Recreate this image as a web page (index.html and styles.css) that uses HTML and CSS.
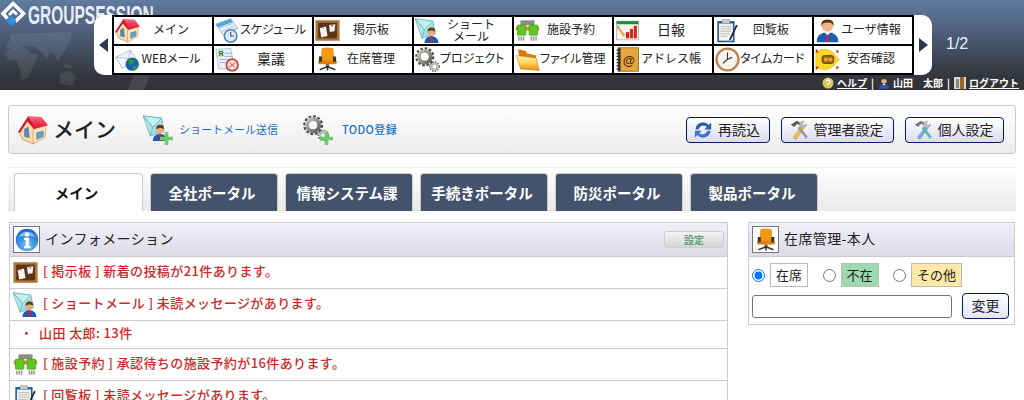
FILE: index.html
```html
<!DOCTYPE html>
<html lang="ja">
<head>
<meta charset="utf-8">
<title>GroupSession</title>
<link rel="stylesheet" href="styles.css">
</head>
<body>
<svg class="defs" width="0" height="0">
  <defs>
    <linearGradient id="g-roof" x1="0" y1="0" x2="0" y2="1"><stop offset="0" stop-color="#f4798a"/><stop offset=".5" stop-color="#ec3a52"/><stop offset="1" stop-color="#e0122e"/></linearGradient>
    <linearGradient id="g-mail" x1="0" y1="0" x2="1" y2="1"><stop offset="0" stop-color="#d4f5f5"/><stop offset="1" stop-color="#7fd2d8"/></linearGradient>
    <linearGradient id="g-gear" x1="0" y1="0" x2="1" y2="1"><stop offset="0" stop-color="#c4c4be"/><stop offset="1" stop-color="#5e5e5a"/></linearGradient>
    <linearGradient id="g-folder" x1="0" y1="0" x2="0" y2="1"><stop offset="0" stop-color="#fff3b0"/><stop offset=".45" stop-color="#ffd860"/><stop offset="1" stop-color="#f08a10"/></linearGradient>
    <radialGradient id="g-info" cx=".5" cy=".75" r=".8"><stop offset="0" stop-color="#6fc0f8"/><stop offset="1" stop-color="#0d5fc4"/></radialGradient>
    <symbol id="i-home" viewBox="0 0 32 32">
      <path d="M1 18 L10 4 L17 14 L17 31 L5 26Z" fill="#f9dcae" stroke="#b98a55" stroke-width=".8"/>
      <path d="M16 15 L30 11 L29 24 L16 31Z" fill="#fbe3bd" stroke="#b98a55" stroke-width=".6"/>
      <path d="M11 1 L25 2 L32 11 L17 15Z" fill="url(#g-roof)"/>
      <path d="M11 1 L0 18 L2 19 L10 7 L17 15 L18 14Z" fill="#d0152e"/>
      <path d="M7 15 L11 13 L12 24 L7 23Z" fill="#3c8ede" stroke="#7a5a30" stroke-width=".5"/>
      <path d="M20 19 L27 17 L27 23 L20 26Z" fill="#58a2e4" stroke="#7a5a30" stroke-width=".5"/>
    </symbol>
    <symbol id="i-schedule" viewBox="0 0 32 32">
      <path d="M1 8 L20 1 L29 13 L12 24Z" fill="#eaf3fb" stroke="#7fa5c4"/>
      <path d="M1 8 L20 1 L23 5 L4 12Z" fill="#58a4d8"/>
      <path d="M6 13 L22 7 M9 17 L25 10 M12 20 L27 13" stroke="#9fc2dc" stroke-width="1.2"/>
      <circle cx="20" cy="23" r="8" fill="#dce8f4" stroke="#5a86b5" stroke-width="2"/>
      <path d="M20 18 V23 H24" stroke="#345a86" stroke-width="1.5" fill="none"/>
    </symbol>
    <symbol id="i-board" viewBox="0 0 32 32">
      <rect x="1" y="3" width="30" height="26" fill="#a9713c" stroke="#c49464"/>
      <rect x="4" y="6" width="24" height="20" fill="#5d3416"/>
      <path d="M6 13 L14 11 L16 23 L8 25Z" fill="#f4f4f2"/>
      <path d="M18 9 L26 8 L25 17 L19 18Z" fill="#eef1f4"/>
      <circle cx="10" cy="13" r="1.3" fill="#9fc8ea"/>
      <circle cx="22" cy="10" r="1.3" fill="#d8504c"/>
    </symbol>
    <symbol id="i-smail" viewBox="0 0 32 32">
      <path d="M0 1 L23 4 L26 20 L9 26Z" fill="url(#g-mail)" stroke="#4fa5b0" stroke-width=".8"/>
      <path d="M0 1 L23 4 L12 15Z" fill="#c6f0ee" stroke="#4fa5b0" stroke-width=".7"/>
      <path d="M0 1 L12 15 L9 26" fill="none" stroke="#4fa5b0" stroke-width=".7"/>
      <circle cx="21" cy="18" r="5" fill="#e6ab80"/>
      <path d="M16 17.5 Q16 12 21 12 Q26 12 26 17.5 Q21 14.5 16 17.5Z" fill="#6b3a17"/>
      <path d="M12 32 Q12 24 21 23 Q30 24 30 32Z" fill="#1f58ad"/>
      <path d="M20 24 h2 l.5 6 -1.5 2 -1.5 -2Z" fill="#d22"/>
    </symbol>
    <symbol id="i-reserve" viewBox="0 0 32 32">
      <rect x="7" y="3" width="18" height="6" fill="#8c8c84"/>
      <rect x="1" y="11" width="30" height="5" fill="#d98a3f"/>
      <rect x="3" y="9" width="11" height="13" rx="1" fill="#5fc81e" stroke="#2f8a10" stroke-width=".7"/>
      <rect x="18" y="9" width="11" height="13" rx="1" fill="#5fc81e" stroke="#2f8a10" stroke-width=".7"/>
      <rect x="4" y="23" width="9" height="6" fill="#e8e8e0"/>
      <rect x="19" y="23" width="9" height="6" fill="#e8e8e0"/>
      <path d="M5 24 V29 M8 24 V29 M11 24 V29 M21 24 V29 M24 24 V29 M27 24 V29" stroke="#444" stroke-width=".8"/>
    </symbol>
    <symbol id="i-report" viewBox="0 0 32 32">
      <rect x="2" y="4" width="28" height="24" fill="#f4f4ee" stroke="#a7b0ac"/>
      <rect x="2" y="4" width="28" height="4" fill="#1d8a3f"/>
      <rect x="14" y="18" width="4" height="8" fill="#d8241d"/>
      <rect x="19" y="14" width="4" height="12" fill="#d8241d"/>
      <rect x="24" y="10" width="4" height="16" fill="#d8241d"/>
      <path d="M3 11 L12 23" stroke="#e9b04a" stroke-width="3"/>
      <path d="M3 11 L5 12" stroke="#ef7a8c" stroke-width="3"/>
    </symbol>
    <symbol id="i-circular" viewBox="0 0 32 32">
      <rect x="3" y="4" width="22" height="27" fill="#1c56a6"/>
      <rect x="5" y="7" width="18" height="22" fill="#f4f4ec"/>
      <rect x="9" y="2" width="10" height="5" rx="1" fill="#c5cbd2" stroke="#777" stroke-width=".5"/>
      <path d="M7 11 H21 M7 14 H21 M7 17 H21 M7 20 H19 M7 23 H16" stroke="#aaa"/>
      <path d="M28 9 L19 28" stroke="#223" stroke-width="2.2"/>
    </symbol>
    <symbol id="i-user" viewBox="0 0 32 32">
      <circle cx="16" cy="10" r="7.5" fill="#efb48a"/>
      <path d="M8 11 Q7 2 16 2 Q25 2 24 11 Q22 5 16 6 Q10 5 8 11Z" fill="#5c2f12"/>
      <path d="M2 31 Q2 19 16 18 Q30 19 30 31Z" fill="#1f5ab3"/>
      <path d="M12 18 L16 23 L20 18Z" fill="#fff"/>
      <path d="M15 21 h2 l.8 8 -1.8 2 -1.8 -2Z" fill="#dc2230"/>
    </symbol>
    <symbol id="i-webmail" viewBox="0 0 32 32">
      <path d="M1 13 L20 4 L28 17 L9 27Z" fill="#f2f5f8" stroke="#9db4c8"/>
      <path d="M1 13 L17 15 L20 4" fill="none" stroke="#9db4c8"/>
      <circle cx="22" cy="22" r="8.5" fill="#1a5fb8"/>
      <path d="M17 16 Q24 15 25 20 Q22 24 18 22Z M22 25 Q28 23 29 25 Q27 30 23 30Z" fill="#2e9a35"/>
    </symbol>
    <symbol id="i-ringi" viewBox="0 0 32 32">
      <path d="M1 3 L20 2 L25 28 L5 28Z" fill="#eaf2fa" stroke="#9db4c8"/>
      <path d="M4 4 H11 V13 H4Z" fill="#cfe0b8"/>
      <text x="4.5" y="12" class="svg-r">R</text>
      <path d="M12 8 H22 M12 12 H22 M6 16 H24 M6 20 H18" stroke="#8ba6bf"/>
      <circle cx="22" cy="23" r="7.5" fill="#f2dcd8" stroke="#c43d34" stroke-width="2"/>
      <path d="M18 26 L26 20 M19 20 L25 26" stroke="#c43d34"/>
    </symbol>
    <symbol id="i-chair" viewBox="0 0 32 32">
      <path d="M9 2 Q16 0 23 2 L24 17 H8Z" fill="#f39a12" stroke="#c87206" stroke-width=".6"/>
      <rect x="4" y="17" width="24" height="5" rx="2.5" fill="#e47e04"/>
      <path d="M5 12 H9 V19 H5Z M23 12 H27 V19 H23Z" fill="#333"/>
      <rect x="14" y="22" width="4" height="4" fill="#555"/>
      <path d="M6 29 L16 25 L26 29 M16 25 V30" stroke="#333" stroke-width="2" fill="none"/>
    </symbol>
    <symbol id="i-gears" viewBox="0 0 32 32">
      <circle cx="12.5" cy="12.5" r="10.8" fill="none" stroke="#4e4e4a" stroke-width="3" stroke-dasharray="3.4 2.2"/>
      <circle cx="12.5" cy="12.5" r="7.5" fill="none" stroke="url(#g-gear)" stroke-width="5"/>
      <circle cx="25" cy="25" r="6" fill="none" stroke="#6a6a64" stroke-width="2" stroke-dasharray="2 1.5"/>
      <circle cx="25" cy="25" r="3.8" fill="none" stroke="#b6b6b0" stroke-width="2.6"/>
    </symbol>
    <symbol id="i-folder" viewBox="0 0 32 32">
      <path d="M4 3 L14 5 L15 8 L27 11 L28 27 L7 27Z" fill="#d97c0c"/>
      <path d="M2 11 L27 14 L31 30 L7 28Z" fill="url(#g-folder)" stroke="#c9780e" stroke-width=".7"/>
    </symbol>
    <symbol id="i-address" viewBox="0 0 32 32">
      <rect x="4" y="1" width="26" height="30" fill="#e8a73c" stroke="#8a5c18"/>
      <path d="M2 4 H7 M2 8 H7 M2 12 H7 M2 16 H7 M2 20 H7 M2 24 H7 M2 28 H7" stroke="#222" stroke-width="1.6"/>
      <rect x="4" y="1" width="3" height="30" fill="#333"/>
      <text x="10" y="23" class="svg-at">@</text>
    </symbol>
    <symbol id="i-clock" viewBox="0 0 32 32">
      <circle cx="16" cy="16" r="14" fill="#f6f4ee" stroke="#b9824f" stroke-width="3"/>
      <path d="M16 7 V16 L10 21 M16 16 L22 13" stroke="#333" stroke-width="1.4" fill="none"/>
    </symbol>
    <symbol id="i-anpi" viewBox="0 0 32 32">
      <path d="M1 6 Q14 -1 24 8 L31 16 L24 24 Q14 33 1 26Z" fill="#f5dc22" stroke="#c9a70e" stroke-width=".6"/>
      <rect x="9" y="11" width="15" height="10" rx="3" fill="#a0651a" stroke="#4a2e0a"/>
      <circle cx="14" cy="16" r="2.6" fill="#e8a33a"/>
      <circle cx="20" cy="16" r="2.6" fill="#e8a33a"/>
      <path d="M1 2 L5 7 L1 7Z M1 30 L5 25 L1 25Z" fill="#d81e1e"/>
      <path d="M28 3 L31 7 L27 7Z M28 29 L31 25 L27 25Z" fill="#d81e1e"/>
    </symbol>
    <symbol id="i-info" viewBox="0 0 32 32">
      <circle cx="16" cy="16" r="15" fill="url(#g-info)"/>
      <path d="M4 12 Q16 -2 28 12 Q16 8 4 12Z" fill="#a9d8f8" opacity=".7"/>
      <circle cx="16" cy="8.5" r="3" fill="#fff"/>
      <path d="M12 13 H19 V24 H21 V27 H12 V24 H14 V16 H12Z" fill="#fff"/>
    </symbol>
    <symbol id="i-refresh" viewBox="0 0 32 32">
      <path d="M4 15 A12 12 0 0 1 25 8 L29 4 V15 H18 L22 11 A8 8 0 0 0 9 15Z" fill="#2c5fa8"/>
      <path d="M28 17 A12 12 0 0 1 7 24 L3 28 V17 H14 L10 21 A8 8 0 0 0 23 17Z" fill="#3b76c4"/>
    </symbol>
    <symbol id="i-tools" viewBox="0 0 32 32">
      <path d="M7 28 L20 10 L24 13 L11 31Z" fill="#f2c230" stroke="#8a6a10" stroke-width=".6"/>
      <path d="M3 7 L13 1 L23 8 L20 10 L13 6 L8 11Z" fill="#555"/>
      <path d="M27 30 L14 13 L17 10 L30 27Z" fill="#9a9a9a"/>
      <path d="M16 8 Q17 1 24 2 L21 6 L24 9 L28 6 Q28 13 21 13Z" fill="#bbb" stroke="#777" stroke-width=".5"/>
    </symbol>
    <symbol id="i-tools2" viewBox="0 0 32 32">
      <path d="M7 28 L20 10 L24 13 L11 31Z" fill="#7fa8e8" stroke="#56769f" stroke-width=".6"/>
      <path d="M3 7 L13 1 L23 8 L20 10 L13 6 L8 11Z" fill="#777"/>
      <path d="M27 30 L14 13 L17 10 L30 27Z" fill="#53b8a8"/>
      <path d="M16 8 Q17 1 24 2 L21 6 L24 9 L28 6 Q28 13 21 13Z" fill="#bbb" stroke="#777" stroke-width=".5"/>
    </symbol>
    <symbol id="i-plus" viewBox="0 0 14 14">
      <path d="M5 0 H9 V5 H14 V9 H9 V14 H5 V9 H0 V5 H5Z" fill="#6ecb6a"/>
    </symbol>
    <symbol id="i-help" viewBox="0 0 12 12">
      <circle cx="6" cy="6" r="5.5" fill="#d7c75a"/>
      <path d="M4 4 Q6 2 8 4 Q8 6 6 7 V8" stroke="#fff" stroke-width="1.2" fill="none"/>
    </symbol>
    <symbol id="i-door" viewBox="0 0 12 12">
      <rect x="0" y="0" width="12" height="12" fill="#d8d8d0"/>
      <rect x="6" y="0" width="4" height="12" fill="#9a6a28"/>
      <rect x="2" y="2" width="3" height="9" fill="#8a8a84"/>
    </symbol>
  </defs>
</svg>

<header class="top">
  <svg class="worldmap" viewBox="0 0 160 60" width="160" height="60" aria-hidden="true">
    <path d="M10 4 L72 2 L70 11 L66 19 L61 25 L58 32 L55 25 L50 22 L47 30 L44 25 L38 19 L35 17 L28 16 L16 19 L8 20 L6 15 L10 10Z"/>
    <path d="M5 22 L14 18 L26 18 L30 23 L38 25 L33 36 L28 48 L22 50 L19 38 L17 30 L8 30Z"/>
    <path d="M60 44 L70 40 L76 48 L72 56 L60 54Z"/>
    <path d="M62 33 L70 35 L73 38 L65 38Z"/>
    <path d="M134 44 L150 46 L144 60 L128 60Z"/>
  </svg>
  <div class="logo">
    <svg class="logo-mark" viewBox="0 0 26 26" width="26" height="26">
      <path d="M7.5 18.5 L3 13.5 L13 3.5 L23.5 13.5 L15.5 21.5" fill="none" stroke="#fff" stroke-width="3.6"/>
      <path d="M9 15 L13 11 L17 14.5" fill="none" stroke="#fff" stroke-width="2.8"/>
      <path d="M6.5 21 L12 16 L16.5 21 L11.5 26Z" fill="#2b94ea"/>
    </svg>
    <span class="logo-text">GROUPSESSION</span>
  </div>
  <div class="nav-row">
    <nav class="nav">
      <span class="arrow arrow-left"><span class="tri tri-left"></span></span>
      <div class="nav-grid">
        <a class="nav-cell"><svg class="nav-ico"><use href="#i-home"/></svg><span class="nav-label">メイン</span></a>
        <a class="nav-cell"><svg class="nav-ico"><use href="#i-schedule"/></svg><span class="nav-label nav-palt">スケジュール</span></a>
        <a class="nav-cell"><svg class="nav-ico"><use href="#i-board"/></svg><span class="nav-label">掲示板</span></a>
        <a class="nav-cell"><svg class="nav-ico"><use href="#i-smail"/></svg><span class="nav-label nav-two">ショート<br>メール</span></a>
        <a class="nav-cell"><svg class="nav-ico"><use href="#i-reserve"/></svg><span class="nav-label">施設予約</span></a>
        <a class="nav-cell"><svg class="nav-ico"><use href="#i-report"/></svg><span class="nav-label nav-lg">日報</span></a>
        <a class="nav-cell"><svg class="nav-ico"><use href="#i-circular"/></svg><span class="nav-label">回覧板</span></a>
        <a class="nav-cell"><svg class="nav-ico"><use href="#i-user"/></svg><span class="nav-label">ユーザ情報</span></a>
        <a class="nav-cell"><svg class="nav-ico"><use href="#i-webmail"/></svg><span class="nav-label nav-palt">WEBメール</span></a>
        <a class="nav-cell"><svg class="nav-ico"><use href="#i-ringi"/></svg><span class="nav-label nav-lg">稟議</span></a>
        <a class="nav-cell"><svg class="nav-ico"><use href="#i-chair"/></svg><span class="nav-label">在席管理</span></a>
        <a class="nav-cell"><svg class="nav-ico"><use href="#i-gears"/></svg><span class="nav-label nav-palt">プロジェクト</span></a>
        <a class="nav-cell"><svg class="nav-ico"><use href="#i-folder"/></svg><span class="nav-label nav-palt">ファイル管理</span></a>
        <a class="nav-cell"><svg class="nav-ico"><use href="#i-address"/></svg><span class="nav-label">アドレス帳</span></a>
        <a class="nav-cell"><svg class="nav-ico"><use href="#i-clock"/></svg><span class="nav-label nav-palt">タイムカード</span></a>
        <a class="nav-cell"><svg class="nav-ico"><use href="#i-anpi"/></svg><span class="nav-label">安否確認</span></a>
      </div>
      <span class="arrow arrow-right"><span class="tri tri-right"></span></span>
    </nav>
    <span class="pager">1/2</span>
  </div>
  <div class="util">
    <svg class="util-ico"><use href="#i-help"/></svg><a class="util-link">ヘルプ</a><span class="util-sep">|</span>
    <svg class="util-ico"><use href="#i-user"/></svg><span class="util-name">山田　太郎</span><span class="util-sep">|</span>
    <svg class="util-ico"><use href="#i-door"/></svg><a class="util-link">ログアウト</a>
  </div>
</header>

<main class="page">
  <section class="titlebar">
    <svg class="title-ico"><use href="#i-home"/></svg>
    <h1 class="title">メイン</h1>
    <a class="quick quick-mail"><span class="quick-ico"><svg class="quick-main"><use href="#i-smail"/></svg><svg class="quick-plus"><use href="#i-plus"/></svg></span><span class="quick-text">ショートメール送信</span></a>
    <a class="quick quick-todo"><span class="quick-ico"><svg class="quick-main"><use href="#i-gears"/></svg><svg class="quick-plus"><use href="#i-plus"/></svg></span><span class="quick-text">TODO登録</span></a>
    <div class="actions">
      <button class="btn btn-reload"><svg class="btn-ico"><use href="#i-refresh"/></svg><span class="btn-text">再読込</span></button>
      <button class="btn btn-admin"><svg class="btn-ico"><use href="#i-tools"/></svg><span class="btn-text">管理者設定</span></button>
      <button class="btn btn-personal"><svg class="btn-ico"><use href="#i-tools2"/></svg><span class="btn-text">個人設定</span></button>
    </div>
  </section>

  <div class="tabs">
    <a class="tab tab-active">メイン</a>
    <a class="tab">全社ポータル</a>
    <a class="tab">情報システム課</a>
    <a class="tab">手続きポータル</a>
    <a class="tab">防災ポータル</a>
    <a class="tab">製品ポータル</a>
  </div>

  <div class="columns">
    <section class="panel info">
      <div class="panel-head">
        <span class="head-ico"><svg class="head-svg"><use href="#i-info"/></svg></span>
        <span class="head-title">インフォメーション</span>
        <button class="set-btn">設定</button>
      </div>
      <div class="row"><svg class="row-ico"><use href="#i-board"/></svg><span class="row-text">[ 掲示板 ] 新着の投稿が21件あります。</span></div>
      <div class="row"><svg class="row-ico"><use href="#i-smail"/></svg><span class="row-text">[ ショートメール ] 未読メッセージがあります。</span></div>
      <div class="row row-sub"><span class="dot">・</span><span class="row-text row-name">山田 太郎: 13件</span></div>
      <div class="row"><svg class="row-ico"><use href="#i-reserve"/></svg><span class="row-text">[ 施設予約 ] 承認待ちの施設予約が16件あります。</span></div>
      <div class="row"><svg class="row-ico"><use href="#i-circular"/></svg><span class="row-text">[ 回覧板 ] 未読メッセージがあります。</span></div>
    </section>

    <section class="panel zaiseki">
      <div class="panel-head">
        <span class="head-ico head-ico-light"><svg class="head-svg"><use href="#i-chair"/></svg></span>
        <span class="head-title">在席管理-本人</span>
      </div>
      <form class="status">
        <div class="status-row">
          <label class="status-opt"><input type="radio" name="st" class="radio" checked><span class="chip chip-in">在席</span></label>
          <label class="status-opt"><input type="radio" name="st" class="radio"><span class="chip chip-out">不在</span></label>
          <label class="status-opt"><input type="radio" name="st" class="radio"><span class="chip chip-other">その他</span></label>
        </div>
        <div class="status-row status-row-2">
          <input type="text" class="memo">
          <button type="button" class="change">変更</button>
        </div>
      </form>
    </section>
  </div>
</main>
</body>
</html>
```
FILE: styles.css
```css
html, body { margin: 0; padding: 0; height: 400px; overflow: hidden; background: #fff; }
body { font-family: "Noto Sans CJK JP", "Liberation Sans", sans-serif; font-size: 12px; color: #222; }
.defs { position: absolute; }
.svg-r { font: bold 9px "Liberation Sans", sans-serif; fill: #1c7a30; }
.svg-at { font: bold 16px "Liberation Sans", sans-serif; fill: #4a2c08; }

/* header */
.top { position: relative; height: 90px; overflow: hidden; display: flex; flex-direction: column;
  background: linear-gradient(#5f7b9f 0, #586f90 15%, #3f4a5c 60%, #33363c 85%, #303236 100%); }
.worldmap { position: absolute; left: 0; top: 30px; fill: rgba(255,255,255,.09); }
.logo { position: absolute; left: 0; top: 0; display: flex; align-items: flex-start; }
.logo-mark { flex: none; }
.logo-text { display: block; margin: 3px 0 0 2px; font: 700 25px/24px "Liberation Sans", sans-serif; color: #e8edf3;
  transform: scaleX(.62); transform-origin: left top; white-space: nowrap; }
.nav-row { position: relative; display: flex; align-items: center; padding: 15px 0 0 94px; }
.nav { display: flex; height: 60px; }
.arrow { width: 18px; background: #fff; display: flex; align-items: center; justify-content: center; }
.arrow-left { border-radius: 10px 0 0 10px; }
.arrow-right { border-radius: 0 10px 10px 0; }
.tri { width: 0; height: 0; border-top: 7px solid transparent; border-bottom: 7px solid transparent; }
.tri-left { border-right: 9px solid #2d3a4c; }
.tri-right { border-left: 9px solid #2d3a4c; }
.nav-grid { display: grid; grid-template-columns: repeat(8, 98px); grid-template-rows: 27px 27px; gap: 2px; padding: 2px; background: #000; }
.nav-cell { display: flex; align-items: center; background: #fff; padding: 0 10px 0 1px; color: #222; }
.nav-ico { flex: none; width: 25px; height: 25px; }
.nav-label { flex: 1; min-width: 0; text-align: center; font-size: 12px; line-height: 14px; padding-bottom: 3px; white-space: nowrap; }
.nav-palt { font-feature-settings: "palt"; }
.nav-lg { font-size: 14px; }
.nav-two { line-height: 12px; padding-bottom: 2px; }
.pager { margin: 0 0 3px 14px; font-family: "Liberation Sans", sans-serif; font-size: 16px; color: #f0f3f7; }
.util { display: flex; justify-content: flex-end; align-items: center; height: 15px; padding-right: 5px; color: #fff; font-size: 10px; font-weight: 700; }
.util-ico { width: 12px; height: 12px; margin-right: 3px; }
.util-link { color: #fff; text-decoration: underline; }
.util-sep { margin: 0 4px; }
.util-name { color: #fff; }

/* page */
.page { padding: 15px 8px 0; }
.titlebar { display: flex; align-items: center; height: 47px; border: 1px solid #ccc; border-radius: 3px; padding-left: 10px;
  background: linear-gradient(#fff, #ececec); }
.title-ico { width: 30px; height: 30px; margin-left: -1px; }
.title { margin: 0 0 3px 5px; font-size: 21px; font-weight: 500; color: #222; line-height: 1; width: 90px; }
.quick { display: flex; align-items: center; color: #1a6fc9; font-size: 11px; }
.quick-mail { width: 160px; }
.quick-ico { position: relative; display: block; width: 34px; height: 30px; margin-right: 2px; }
.quick-todo .quick-ico { margin-right: 5px; }
.quick-main { position: absolute; left: 0; top: 0; width: 26px; height: 26px; }
.quick-plus { position: absolute; left: 17px; top: 17px; width: 13px; height: 13px; }
.quick-text { white-space: nowrap; padding-bottom: 2px; }
.quick-todo .quick-text { font-weight: 500; letter-spacing: .4px; }
.actions { margin-left: auto; margin-right: 11px; display: flex; gap: 11px; }
.btn { display: flex; align-items: center; justify-content: center; height: 26px; padding: 0 3px 0 0; border: 1px solid #001a6e; border-radius: 4px; color: #222;
  background: linear-gradient(#fff, #dcdcec); font: 14px "Noto Sans CJK JP", sans-serif; }
.btn-ico { width: 20px; height: 20px; margin-right: 5px; }
.btn-text { padding-bottom: 2px; }
.btn-reload { width: 84px; }
.btn-admin { width: 113px; }
.btn-personal { width: 99px; }

.tabs { display: flex; gap: 7px; height: 38px; margin-top: 13px; padding: 5px 0 0 6px; align-items: flex-end;
  border-top: 1px solid #eee; background: linear-gradient(#fff, #e9e9e9); box-sizing: content-box; }
.tab { box-sizing: border-box; flex: none; width: 128px; height: 38px; padding-right: 4px; display: flex; align-items: center; justify-content: center; border-radius: 4px 4px 0 0; border: 1px solid #ccc; border-bottom: 0;
  background: #42536b; color: #fff; font-size: 14.5px; font-weight: 700; }
.tab-active { width: 129px; background: #fff; color: #111; }

.columns { display: flex; justify-content: space-between; align-items: flex-start; margin: 11px 1px 0; }
.panel { box-sizing: border-box; border: 1px solid #ccc; }
.info { width: 719px; }
.zaiseki { width: 267px; height: 103px; }
.panel-head { box-sizing: border-box; display: flex; align-items: center; height: 34px; padding-left: 3px; background: linear-gradient(#f0f0f8, #dcdcea); border-bottom: 1px solid #ccc; }
.head-ico { box-sizing: border-box; width: 27px; height: 27px; border: 1px solid #777; display: flex; align-items: center; justify-content: center; background: #fff; }
.head-svg { width: 24px; height: 24px; }
.head-title { margin-left: 5px; font-size: 14px; color: #222; letter-spacing: .4px; padding-bottom: 3px; }
.set-btn { margin-left: auto; margin-right: 3px; width: 60px; height: 17px; padding: 0; border: 1px solid #ccc; border-radius: 3px; color: #5f9f78; font: 700 10px "Noto Sans CJK JP", sans-serif;
  background: linear-gradient(#f5f5f5, #d5d5d5); }
.row { box-sizing: border-box; display: flex; align-items: center; height: 32px; padding-left: 3px; border-bottom: 1px solid #ccc; color: #cc2a2a; font-size: 13px; background: #fff; }
.row-text { font-weight: 500; letter-spacing: .4px; padding-bottom: 5px; }
.row-sub { height: 28px; padding-left: 10px; }
.dot { width: 19px; padding-bottom: 5px; }
.row-ico { flex: none; width: 25px; height: 25px; margin-right: 5px; }

.status { padding: 6px 3px 0; }
.status-row { display: flex; align-items: center; height: 24px; }
.status-opt { display: flex; align-items: center; width: 70.5px; }
.radio { margin: 0 5px 0 0; width: 13px; height: 13px; }
.chip { box-sizing: border-box; height: 24px; padding: 0 5px 2px; display: flex; align-items: center; border: 1px solid #bbb; font-size: 13px; }
.chip-out { background: #9fd9ae; }
.chip-other { background: #ffe9a8; }
.status-row-2 { margin-top: 6px; height: 26px; justify-content: space-between; }
.memo { box-sizing: border-box; width: 200px; height: 23px; border: 1px solid #767676; border-radius: 3px; padding: 0; }
.change { box-sizing: border-box; width: 47px; height: 26px; padding: 0 0 2px; margin-right: 2px; border: 1px solid #001a6e; border-radius: 4px; background: linear-gradient(#fff, #e4e4f2); font: 14px "Noto Sans CJK JP", sans-serif; color: #222; }
```
